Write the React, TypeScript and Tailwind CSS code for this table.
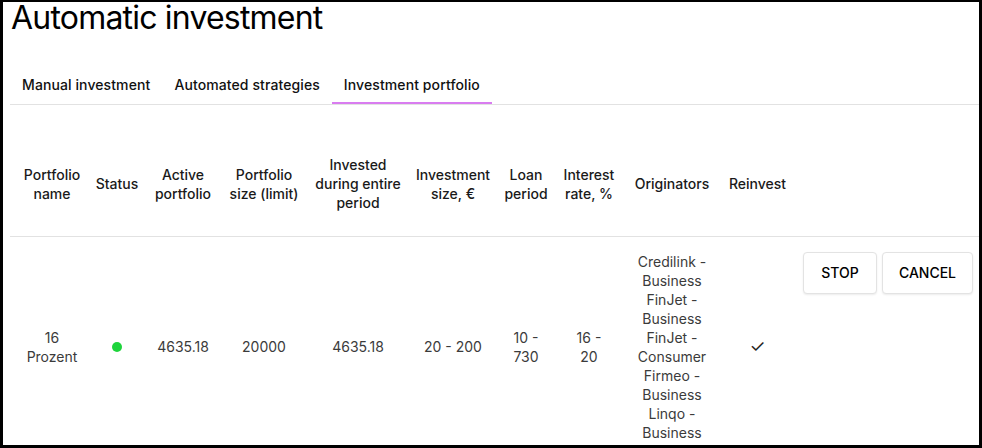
import React from 'react';

const font = { fontFamily: 'Inter, "Noto Sans", sans-serif' };

const tabs = ['Manual investment', 'Automated strategies', 'Investment portfolio'];

const headers: string[][] = [
  ['Portfolio', 'name'],
  ['Status'],
  ['Active', 'portfolio'],
  ['Portfolio', 'size (limit)'],
  ['Invested', 'during entire', 'period'],
  ['Investment', 'size, €'],
  ['Loan', 'period'],
  ['Interest', 'rate, %'],
  ['Originators'],
  ['Reinvest'],
  [],
];

const widths = ['w-[78px]', 'w-[58px]', 'w-[74px]', 'w-[88px]', 'w-[100px]', 'w-[90px]', 'w-[56px]', 'w-[70px]', 'w-[96px]', 'w-[75px]', 'w-[184px]'];

const originators = [
  'Credilink -', 'Business',
  'FinJet -', 'Business',
  'FinJet -', 'Consumer',
  'Firmeo -', 'Business',
  'Linqo -', 'Business',
];

const Lines: React.FC<{ lines: string[] }> = ({ lines }) => (
  <>
    {lines.map((l, i) => (
      <div key={i} className="whitespace-nowrap">{l}</div>
    ))}
  </>
);

const App: React.FC = () => (
  <div className="w-[982px] h-[448px] overflow-hidden bg-white border-t-2 border-l-[3px] border-r-[3px] border-b-[3px] border-black" style={font}>
    <div className="pl-[7px]">
      <h1 className="-mt-0.5 text-[32px] leading-9 tracking-[-0.8px] text-black font-normal pl-px">Automatic investment</h1>

      <div className="mt-[32px] flex border-b border-[#e2e2e2]">
        {tabs.map((t, i) => (
          <div
            key={t}
            className={
              i === 2
                ? 'h-[36px] px-3 flex items-center border-b-2 border-[#d97cf0] text-sm tracking-[0.1px] font-medium text-[#111]'
                : 'h-[36px] px-3 flex items-center border-b-2 border-transparent text-sm tracking-[0.1px] font-medium text-[#111]'
            }
          >
            {t}
          </div>
        ))}
      </div>

      <table className="mt-[27px] table-fixed border-collapse w-[969px] text-sm leading-[19px]">
        <colgroup>
          {widths.map((w, i) => (
            <col key={i} className={w} />
          ))}
        </colgroup>
        <thead>
          <tr className="h-[104px] border-b border-[#e2e2e2]">
            {headers.map((h, i) => (
              <th key={i} className={i === 0 ? 'pl-[6px] align-middle text-center font-medium text-[#1a1a1a]' : 'align-middle text-center font-medium text-[#1a1a1a]'}>
                <Lines lines={h} />
              </th>
            ))}
          </tr>
        </thead>
        <tbody className="text-[#3b3b3b]">
          <tr>
            <td className="pl-[6px] py-[15px] text-center align-middle">
              <Lines lines={['16', 'Prozent']} />
            </td>
            <td className="text-center align-middle">
              <span className="inline-block w-[10px] h-[10px] rounded-full bg-[#1ed43c]" />
            </td>
            <td className="text-center align-middle">4635.18</td>
            <td className="text-center align-middle">20000</td>
            <td className="text-center align-middle">4635.18</td>
            <td className="text-center align-middle">20 - 200</td>
            <td className="text-center align-middle">
              <Lines lines={['10 -', '730']} />
            </td>
            <td className="text-center align-middle">
              <Lines lines={['16 -', '20']} />
            </td>
            <td className="py-[15px] text-center align-middle">
              <Lines lines={originators} />
            </td>
            <td className="text-center align-middle text-lg text-[#222]">✓</td>
            <td className="align-top pt-[15px] pl-2">
              <div className="flex gap-[5px]">
                <button className="w-[74px] h-[42px] rounded border border-[#e3e3e3] shadow-[0_1px_2px_rgba(0,0,0,0.08)] text-sm font-medium text-black bg-white">
                  STOP
                </button>
                <button className="w-[91px] h-[42px] rounded border border-[#e3e3e3] shadow-[0_1px_2px_rgba(0,0,0,0.08)] text-sm font-medium text-black bg-white">
                  CANCEL
                </button>
              </div>
            </td>
          </tr>
        </tbody>
      </table>
    </div>
  </div>
);

export default App;
